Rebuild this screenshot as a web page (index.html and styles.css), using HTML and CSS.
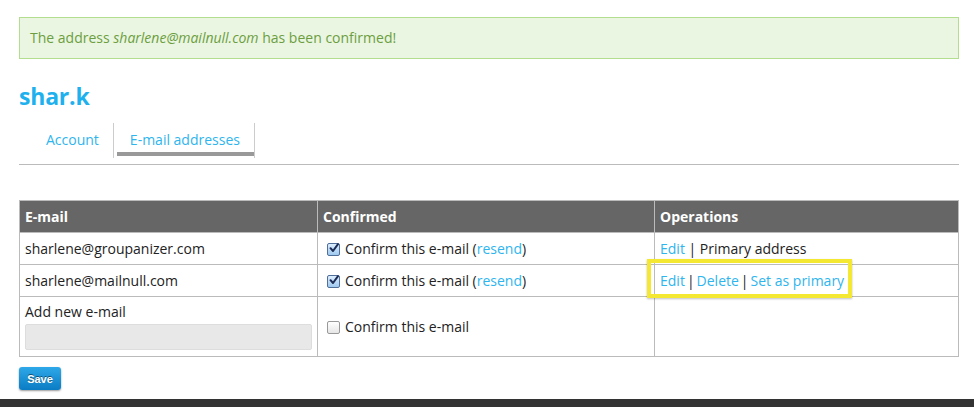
FILE: index.html
```html
<!DOCTYPE html>
<html>
<head>
<meta charset="utf-8">
<link rel="stylesheet" href="styles.css">
</head>
<body>
<div class="page">
  <div class="alert">The address <em>sharlene@mailnull.com</em> has been confirmed!</div>
  <h1 class="title">shar.k</h1>
  <div class="tabs">
    <a class="tab">Account</a>
    <a class="tab active">E-mail addresses</a>
  </div>
  <table class="emails">
    <thead>
      <tr><th class="c1">E-mail</th><th class="c2">Confirmed</th><th class="c3">Operations</th></tr>
    </thead>
    <tbody>
      <tr>
        <td>sharlene@groupanizer.com</td>
        <td><span class="cb checked"><svg viewBox="0 0 12 12" width="12" height="12"><path d="M2.5 6.2 L5 9 L10 2.2" fill="none" stroke="#1c2c55" stroke-width="2" stroke-linecap="round" stroke-linejoin="round"/></svg></span>Confirm this e-mail (<a class="lnk">resend</a>)</td>
        <td><a class="lnk">Edit</a> | Primary address</td>
      </tr>
      <tr>
        <td>sharlene@mailnull.com</td>
        <td><span class="cb checked"><svg viewBox="0 0 12 12" width="12" height="12"><path d="M2.5 6.2 L5 9 L10 2.2" fill="none" stroke="#1c2c55" stroke-width="2" stroke-linecap="round" stroke-linejoin="round"/></svg></span>Confirm this e-mail (<a class="lnk">resend</a>)</td>
        <td class="ops"><span class="hl"><a class="lnk">Edit</a><span class="sep">|</span><a class="lnk">Delete</a><span class="sep">|</span><a class="lnk">Set as primary</a></span></td>
      </tr>
      <tr class="newrow">
        <td class="newcell"><div class="lbl">Add new e-mail</div><div class="inp"></div></td>
        <td><span class="cb"></span>Confirm this e-mail</td>
        <td></td>
      </tr>
    </tbody>
  </table>
  <button class="save">Save</button>
</div>
<div class="footer"></div>
</body>
</html>
```
FILE: styles.css
```css
html, body { margin: 0; padding: 0; background: #fff; }
body { font-family: "Open Sans", "Liberation Sans", sans-serif; font-size: 14px; color: #222; width: 974px; height: 407px; overflow: hidden; position: relative; }
.page { padding: 17px 15px 0 19px; }
.alert { box-sizing: border-box; width: 940px; height: 42px; border: 1px solid #b3de8e; background: #eaf6e1; color: #6c9e3f; padding: 0 0 0 10px; line-height: 40px; font-size: 14px; }
.alert em { font-style: italic; }
.title { margin: 21px 0 0 0; font-size: 23px; line-height: 32px; height: 32px; color: #1eb1ee; font-weight: 700; letter-spacing: -0.2px; }
.tabs { display: flex; width: 940px; height: 35px; margin-top: 11px; border-bottom: 1px solid #bbb; padding-bottom: 6px; }
.tab { color: #2fb5ee; font-size: 14px; line-height: 34px; height: 35px; box-sizing: border-box; }
.tab:first-child { padding: 0 14px 0 27px; border-right: 1px solid #ccc; }
.tab.active { padding: 0 14px 0 16px; border-right: 1px solid #ccc; position: relative; }
.tab.active::after { content: ""; position: absolute; left: 3px; right: 0; bottom: 2px; height: 4px; background: #999; }
.emails { margin-top: 35px; width: 940px; border-collapse: collapse; table-layout: fixed; }
.emails th, .emails td { border: 1px solid #bbb; text-align: left; padding: 0 0 0 5px; }
.emails th { background: #666; color: #fff; font-weight: 700; line-height: 31px; font-size: 14px; }
.c1 { width: 292px; }
.c2 { width: 331px; }
.emails td { line-height: 31px; }
.newrow td { height: 59px; line-height: 18px; }
.emails td.newcell { vertical-align: top; padding-top: 6px; height: 53px; }
.lnk { color: #2fb5ee; }
.sep { margin: 0 2px; }
.cb { display: inline-block; width: 11px; height: 11px; border: 1px solid #999; border-radius: 2px; background: linear-gradient(#fff, #e6e6e6); vertical-align: -2px; margin: 0 5px 0 4px; position: relative; }
.cb.checked { background: linear-gradient(#dceefe, #9fc9ef); border-color: #4f6f9a; }
.cb svg { position: absolute; left: 0; top: -2px; }
.lbl { line-height: 18px; }
.inp { width: 287px; height: 26px; background: #e8e8e8; border: 1px solid #ddd; border-radius: 2px; margin: 3px 0 0 0; box-sizing: border-box; }
.ops { position: relative; }
.hl { position: relative; }
.hl::before { content: ""; position: absolute; left: -13px; top: -12px; right: -8px; bottom: -8px; border: 4px solid #f5e833; box-shadow: 0 1px 2px rgba(0,0,0,0.25); pointer-events: none; }
.save { display: block; margin-top: 10px; width: 42px; height: 23px; border: none; border-radius: 3px; background: linear-gradient(#2ea8e8, #0a7cc4); color: #fff; font-weight: 700; font-size: 11px; font-family: "Liberation Sans", sans-serif; padding: 0; box-shadow: 0 1px 2px rgba(0,0,0,0.4); text-shadow: 0 -1px 0 rgba(0,0,0,0.5); }
.footer { position: absolute; left: 0; right: 0; top: 399px; height: 8px; background: #333; }
```
